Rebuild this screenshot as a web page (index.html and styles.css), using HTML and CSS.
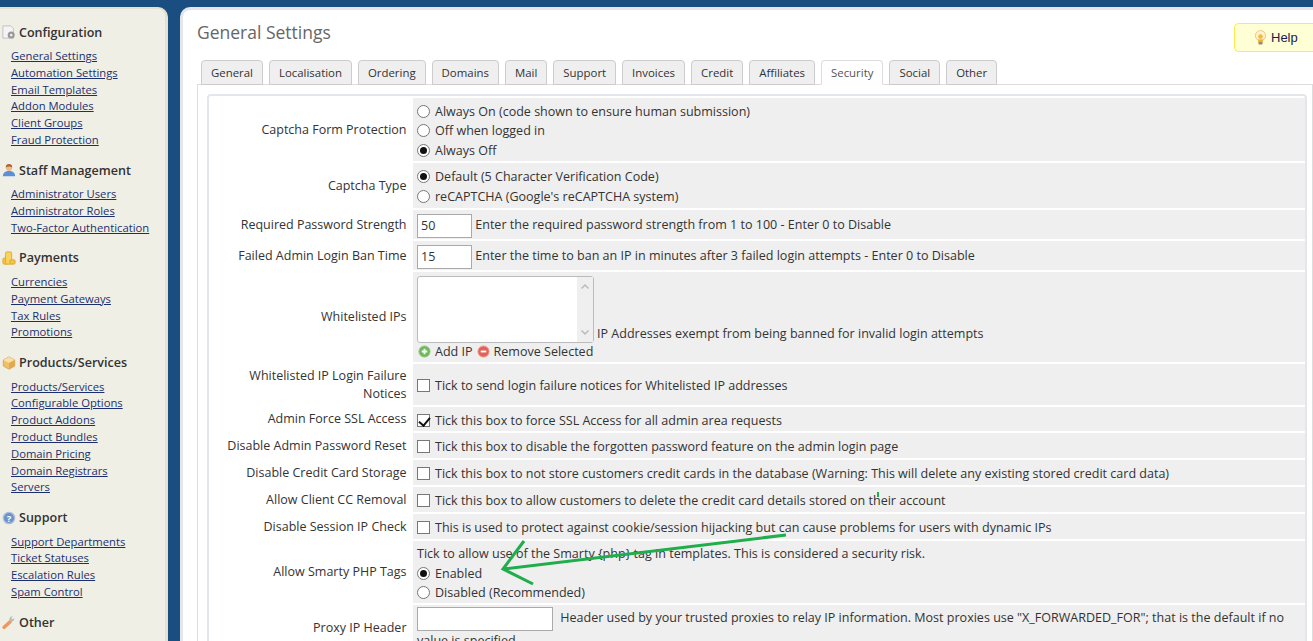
FILE: index.html
```html
<!DOCTYPE html>
<html lang="en">
<head>
    <meta charset="UTF-8">
    <title>General Settings</title>
    <link rel="stylesheet" href="styles.css">
</head>
<body>
<div class="page">
    <div class="sidebar">
        <div class="group">
            <h3><svg class="ico" viewBox="0 0 16 16"><path d="M1 1h9l3 3v11H1z" fill="#f4f4f4" stroke="#bbb"/><circle cx="10.500" cy="11.500" r="4" fill="#999"/><circle cx="10.500" cy="11.500" r="1.500" fill="#eee"/></svg>Configuration</h3>
            <ul>
                <li><a href="javascript:;">General Settings</a></li>
                <li><a href="javascript:;">Automation Settings</a></li>
                <li><a href="javascript:;">Email Templates</a></li>
                <li><a href="javascript:;">Addon Modules</a></li>
                <li><a href="javascript:;">Client Groups</a></li>
                <li><a href="javascript:;">Fraud Protection</a></li>
            </ul>
        </div>
        <div class="group">
            <h3><svg class="ico" viewBox="0 0 16 16"><path d="M1 15c0-4 3-6 7-6s7 2 7 6z" fill="#5b8fd6"/><circle cx="8" cy="5.500" r="3.600" fill="#eeb98c"/><path d="M4.300 5c0-3 1.500-4 3.700-4s3.700 1 3.700 4c-2-1.500-5.500-1.500-7.400 0z" fill="#a5662f"/></svg>Staff Management</h3>
            <ul>
                <li><a href="javascript:;">Administrator Users</a></li>
                <li><a href="javascript:;">Administrator Roles</a></li>
                <li><a href="javascript:;">Two-Factor Authentication</a></li>
            </ul>
        </div>
        <div class="group">
            <h3><svg class="ico" viewBox="0 0 16 16"><rect x="1" y="8" width="6" height="7" rx="1.500" fill="#f5c542" stroke="#e0a52a"/><rect x="4" y="1" width="7" height="14" rx="1.500" fill="#f8d35e" stroke="#e0a52a"/><rect x="9" y="10" width="6" height="5" rx="1.500" fill="#f5c542" stroke="#e0a52a"/></svg>Payments</h3>
            <ul>
                <li><a href="javascript:;">Currencies</a></li>
                <li><a href="javascript:;">Payment Gateways</a></li>
                <li><a href="javascript:;">Tax Rules</a></li>
                <li><a href="javascript:;">Promotions</a></li>
            </ul>
        </div>
        <div class="group">
            <h3><svg class="ico" viewBox="0 0 16 16"><path d="M8 1l6.500 3.500v7L8 15l-6.500-3.500v-7z" fill="#eec06a" stroke="#d9a552"/><path d="M1.500 4.500L8 8l6.500-3.500L8 1z" fill="#f8e0a8"/><path d="M8 8v7l6.500-3.500v-7z" fill="#e3a94f"/></svg>Products/Services</h3>
            <ul>
                <li><a href="javascript:;">Products/Services</a></li>
                <li><a href="javascript:;">Configurable Options</a></li>
                <li><a href="javascript:;">Product Addons</a></li>
                <li><a href="javascript:;">Product Bundles</a></li>
                <li><a href="javascript:;">Domain Pricing</a></li>
                <li><a href="javascript:;">Domain Registrars</a></li>
                <li><a href="javascript:;">Servers</a></li>
            </ul>
        </div>
        <div class="group">
            <h3><svg class="ico" viewBox="0 0 16 16"><circle cx="8" cy="8" r="6.500" fill="#6d93c9" stroke="#a9c0e0" stroke-width="1.500"/><text x="8" y="12" font-size="11" font-weight="700" font-family="Open Sans" text-anchor="middle" fill="#fff">?</text></svg>Support</h3>
            <ul>
                <li><a href="javascript:;">Support Departments</a></li>
                <li><a href="javascript:;">Ticket Statuses</a></li>
                <li><a href="javascript:;">Escalation Rules</a></li>
                <li><a href="javascript:;">Spam Control</a></li>
            </ul>
        </div>
        <div class="group">
            <h3><svg class="ico" viewBox="0 0 16 16"><path d="M2.500 14L9 8" stroke="#f2975a" stroke-width="4" stroke-linecap="round"/><path d="M9.500 7.500a3.500 3.500 0 0 1 3-6l-2 2 1.500 1.500 2-1.500a3.500 3.500 0 0 1-4.500 4z" fill="#b9b9b9"/></svg>Other</h3>
        </div>
    </div>

    <div class="content">
        <div class="help"><svg class="bulb" viewBox="0 0 14 16"><circle cx="7" cy="6" r="5.500" fill="#fff3d0" stroke="#f0c080"/><circle cx="7" cy="7" r="2.500" fill="#f6b73c"/><rect x="4.500" y="10" width="5" height="4" fill="#f0b030"/><rect x="5" y="13" width="4" height="2.500" fill="#888"/></svg>Help</div>
        <h1>General Settings</h1>
        <div class="tabs">
            <span>General</span>
            <span>Localisation</span>
            <span>Ordering</span>
            <span>Domains</span>
            <span>Mail</span>
            <span>Support</span>
            <span>Invoices</span>
            <span>Credit</span>
            <span>Affiliates</span>
            <span class="on">Security</span>
            <span>Social</span>
            <span>Other</span>
        </div>
        <div class="tabbox">
            <table class="form">
                <tr class="r63">
                    <td class="label">Captcha Form Protection</td>
                    <td class="field">
                        <label class="line"><i class="radio"></i>Always On (code shown to ensure human submission)</label>
                        <label class="line"><i class="radio"></i>Off when logged in</label>
                        <label class="line"><i class="radio sel"></i>Always Off</label>
                    </td>
                </tr>
                <tr class="r45">
                    <td class="label">Captcha Type</td>
                    <td class="field">
                        <label class="line"><i class="radio sel"></i>Default (5 Character Verification Code)</label>
                        <label class="line"><i class="radio"></i>reCAPTCHA (Google's reCAPTCHA system)</label>
                    </td>
                </tr>
                <tr class="r29">
                    <td class="label">Required Password Strength</td>
                    <td class="field"><span class="num">50</span> Enter the required password strength from 1 to 100 - Enter 0 to Disable</td>
                </tr>
                <tr class="r29">
                    <td class="label">Failed Admin Login Ban Time</td>
                    <td class="field"><span class="num">15</span> Enter the time to ban an IP in minutes after 3 failed login attempts - Enter 0 to Disable</td>
                </tr>
                <tr class="r90">
                    <td class="label">Whitelisted IPs</td>
                    <td class="field">
                        <div class="ipline">
                            <div class="ipbox">
                                <div class="ipscroll">
                                    <svg class="chev" viewBox="0 0 8 5"><path d="M.5 4.500L4 1l3.500 3.500" fill="none" stroke="#bbb" stroke-width="1.500"/></svg>
                                    <svg class="chev" viewBox="0 0 8 5"><path d="M.5.500L4 4l3.500-3.500" fill="none" stroke="#bbb" stroke-width="1.500"/></svg>
                                </div>
                            </div>
                            <span>IP Addresses exempt from being banned for invalid login attempts</span>
                        </div>
                        <div class="ipbtns">
                            <svg class="mini" viewBox="0 0 14 14"><circle cx="7" cy="7" r="6" fill="#6cb85a" stroke="#8fcb7d"/><path d="M4 7h6M7 4v6" stroke="#fff" stroke-width="2"/></svg>Add IP
                            <svg class="mini" viewBox="0 0 14 14"><circle cx="7" cy="7" r="6" fill="#e2635a" stroke="#ee9a92"/><path d="M4 7h6" stroke="#fff" stroke-width="2"/></svg>Remove Selected
                        </div>
                    </td>
                </tr>
                <tr class="r41">
                    <td class="label">Whitelisted IP Login Failure Notices</td>
                    <td class="field"><label class="line"><i class="check"></i>Tick to send login failure notices for Whitelisted IP addresses</label></td>
                </tr>
                <tr class="r24">
                    <td class="label">Admin Force SSL Access</td>
                    <td class="field"><label class="line"><i class="check sel"></i>Tick this box to force SSL Access for all admin area requests</label></td>
                </tr>
                <tr class="r25">
                    <td class="label">Disable Admin Password Reset</td>
                    <td class="field"><label class="line"><i class="check"></i>Tick this box to disable the forgotten password feature on the admin login page</label></td>
                </tr>
                <tr class="r25">
                    <td class="label">Disable Credit Card Storage</td>
                    <td class="field"><label class="line"><i class="check"></i>Tick this box to not store customers credit cards in the database (Warning: This will delete any existing stored credit card data)</label></td>
                </tr>
                <tr class="r25">
                    <td class="label">Allow Client CC Removal</td>
                    <td class="field"><label class="line"><i class="check"></i>Tick this box to allow customers to delete the credit card details stored on their account</label></td>
                </tr>
                <tr class="r25">
                    <td class="label">Disable Session IP Check</td>
                    <td class="field"><label class="line"><i class="check"></i>This is used to protect against cookie/session hijacking but can cause problems for users with dynamic IPs</label></td>
                </tr>
                <tr class="r62">
                    <td class="label">Allow Smarty PHP Tags</td>
                    <td class="field">
                        <div class="line">Tick to allow use of the Smarty {php} tag in templates. This is considered a security risk.</div>
                        <label class="line"><i class="radio sel"></i>Enabled</label>
                        <label class="line"><i class="radio"></i>Disabled (Recommended)</label>
                    </td>
                </tr>
                <tr>
                    <td class="label">Proxy IP Header</td>
                    <td class="field"><span class="num wide"></span> Header used by your trusted proxies to relay IP information. Most proxies use "X_FORWARDED_FOR"; that is the default if no value is specified</td>
                </tr>
            </table>
        </div>
    </div>
</div>
<svg class="arrow" width="1313" height="641" viewBox="0 0 1313 641">
    <path d="M786 535L503 569M524 541L503 569L533 584" fill="none" stroke="#1fae4b" stroke-width="3"/>
    <path d="M878 492v5" stroke="#1fae4b" stroke-width="2"/>
</svg>
</body>
</html>
```

FILE: styles.css
```css
html,body{
    width: 100%;
    height: 100%;
    overflow: hidden;
}
*{
    margin:0;
    padding:0;
    list-style: none;
    box-sizing: border-box;
}
body{
    background: #1a4d80;
    font-family: "Open Sans", "Liberation Sans", sans-serif;
    font-size: 12.5px;
    color: #333;
}
a{
    color: #1b2f6e;
}
.page{
    display: flex;
    padding-top: 7px;
    height: 100%;
}
.sidebar{
    width: 168px;
    flex-shrink: 0;
    background: #f0efe6;
    border-right: 3px solid #e5e1d2;
    border-top: 2px solid #e5e1d2;
    border-radius: 0 10px 0 0;
    padding-top: 14px;
    overflow: hidden;
}
.group{
    margin-bottom: 12.4px;
}
.group h3{
    display: flex;
    align-items: center;
    font-size: 12.55px;
    font-weight: 600;
    height: 18px;
    padding-left: 2px;
    gap: 3px;
    color: #333;
}
.ico{
    width: 14px;
    height: 14px;
}
.group ul{
    margin-top: 7px;
}
.group li{
    height: 16.8px;
    line-height: 16.8px;
    font-size: 11.25px;
    padding-left: 11px;
}
.content{
    flex: 1;
    margin-left: 12px;
    background: #fff;
    border: 3px solid #e3e6ea;
    border-width: 3px 0 0 3px;
    border-radius: 10px 0 0 0;
    padding: 9px 0 0 14px;
    position: relative;
    overflow: hidden;
}
h1{
    font-size: 17.5px;
    font-weight: 400;
    color: #666;
    line-height: 26px;
    height: 41px;
}
.help{
    position: absolute;
    right: 0;
    top: 13px;
    width: 79px;
    height: 29px;
    background: #ffffd5;
    border: 1px solid #ffe94f;
    border-right: 0;
    border-radius: 5px 0 0 5px;
    font-family: "Liberation Sans", sans-serif;
    font-size: 13px;
    color: #1a1a50;
    display: flex;
    align-items: center;
    padding-left: 19px;
    gap: 4px;
}
.bulb{
    width: 13px;
    height: 15px;
}
.tabs{
    display: flex;
    gap: 6px;
    padding-left: 4px;
    height: 25px;
    position: relative;
    z-index: 1;
}
.tabs span{
    height: 25px;
    line-height: 24px;
    padding: 0 9px;
    font-size: 11.42px;
    background: #efefef;
    border: 1px solid #ccc;
    border-radius: 4px 4px 0 0;
    color: #333;
}
.tabs span.on{
    background: #fff;
    border-color: #ddd;
    border-bottom-color: #fff;
    color: #555;
}
.tabbox{
    border: 1px solid #ddd;
    margin-top: -1px;
    padding: 9px 5px 0 9px;
    height: 700px;
}
.form{
    width: 100%;
    border: 2px solid #e3e6ea;
    border-radius: 4px;
    border-collapse: separate;
    border-spacing: 0 2px;
}
.r24{ height: 24px; }
.r25{ height: 25px; }
.r29{ height: 29px; }
.r41{ height: 41px; }
.r45{ height: 45px; }
.r62{ height: 62px; }
.r63{ height: 63px; }
.r90{ height: 90px; }
.label{
    width: 204px;
    text-align: right;
    padding: 0 6.5px 0 8px;
    line-height: 18px;
}
.field{
    background: #efefef;
    padding: 2px 4px 0;
    line-height: 19px;
    font-size: 12.54px;
}
.line{
    display: flex;
    align-items: center;
    height: 19.5px;
}
.radio,.check{
    display: block;
    width: 13px;
    height: 13px;
    background: #fff;
    border: 1px solid #777;
    margin-right: 5px;
    flex-shrink: 0;
    position: relative;
}
.radio{
    border-radius: 50%;
}
.radio.sel::after{
    content: "";
    position: absolute;
    left: 2px;
    top: 2px;
    width: 7px;
    height: 7px;
    border-radius: 50%;
    background: #111;
}
.check.sel::after{
    content: "";
    position: absolute;
    left: 3px;
    top: 0;
    width: 5px;
    height: 9px;
    border: solid #111;
    border-width: 0 2px 2px 0;
    transform: rotate(40deg);
}
.num{
    display: inline-block;
    width: 55px;
    height: 24px;
    line-height: 22px;
    background: #fff;
    border: 1px solid #aaa;
    padding-left: 3px;
    vertical-align: middle;
}
.wide{
    width: 136px;
    margin-right: 4px;
}
.ipline{
    display: flex;
    align-items: flex-end;
    gap: 3px;
}
.ipbox{
    width: 177px;
    height: 67px;
    background: #fff;
    border: 1px solid #bbb;
    border-radius: 3px;
    display: flex;
    justify-content: flex-end;
}
.ipscroll{
    width: 16px;
    background: #efefef;
    display: flex;
    flex-direction: column;
    justify-content: space-between;
    align-items: center;
    padding: 7px 0;
}
.chev{
    width: 8px;
    height: 5px;
}
.ipbtns{
    display: flex;
    align-items: center;
    gap: 4px;
    margin-top: -1px;
    padding-left: 1px;
}
.mini{
    width: 13px;
    height: 13px;
}
.arrow{
    position: absolute;
    left: 0;
    top: 0;
    pointer-events: none;
}
```
